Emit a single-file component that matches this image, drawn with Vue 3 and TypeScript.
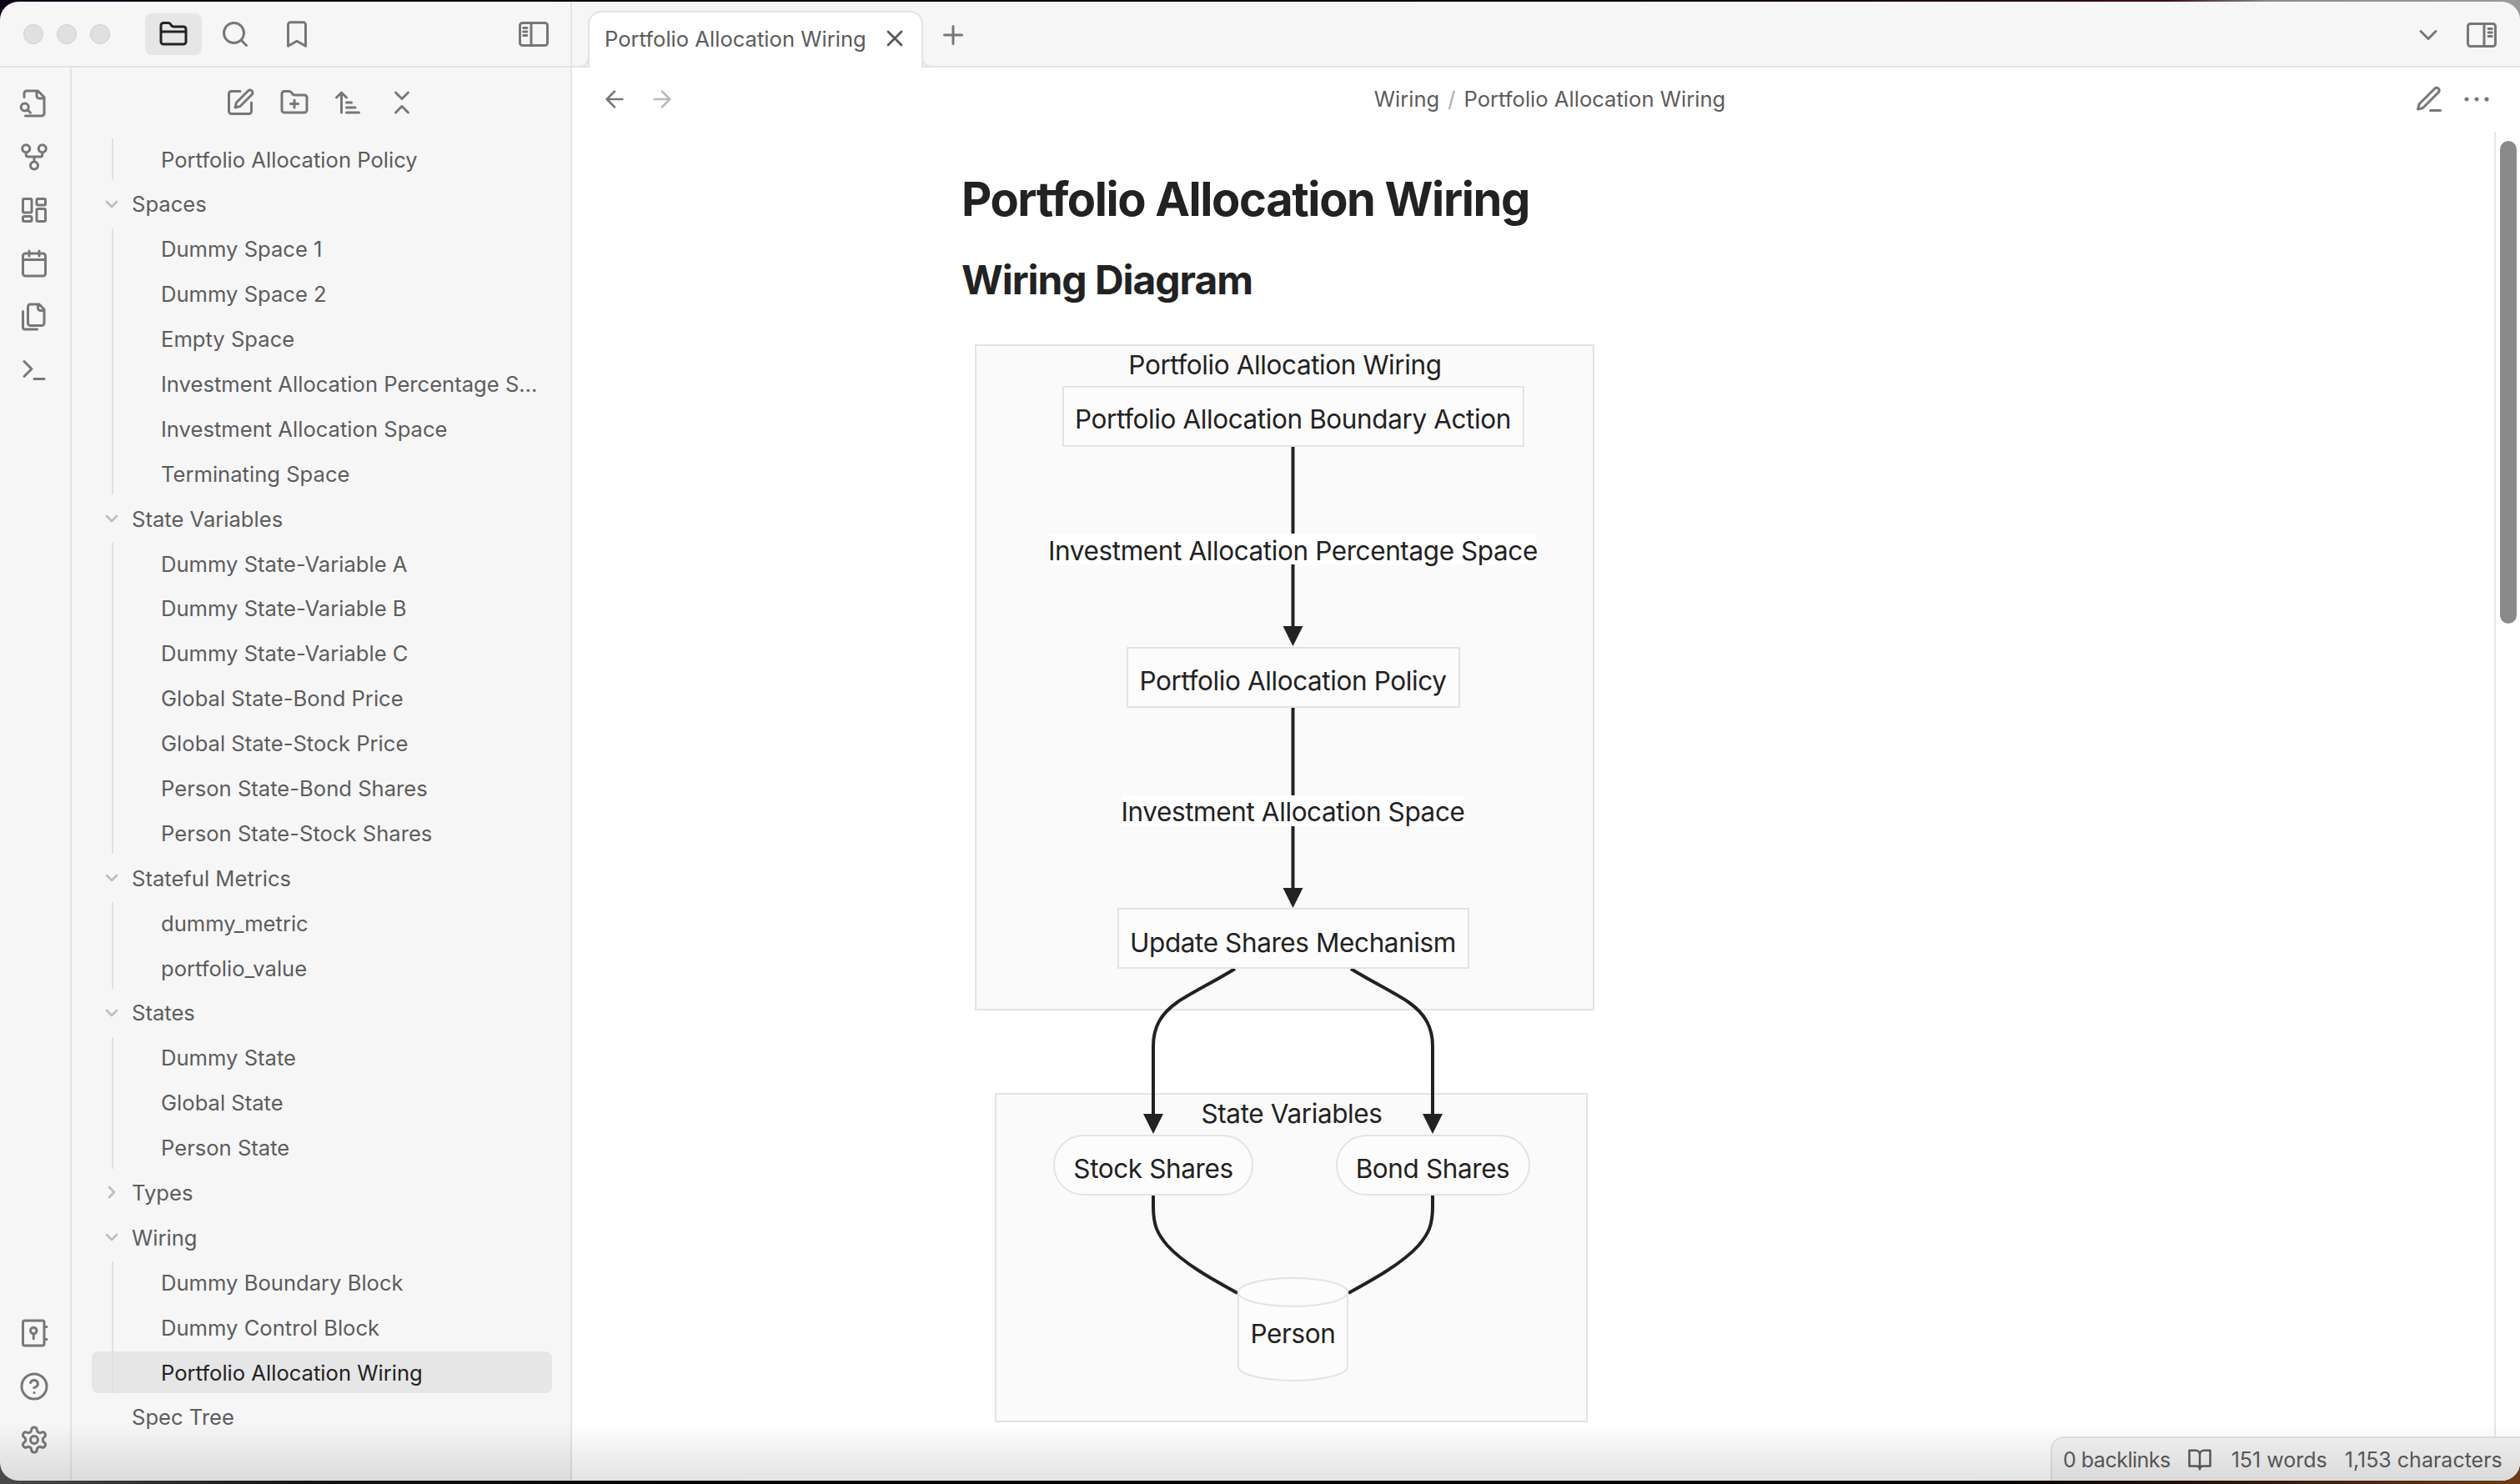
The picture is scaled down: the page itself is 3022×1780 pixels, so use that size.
<template>
  <div class="window">
    <!-- title bar -->
    <div class="titlebar">
      <div class="title-left">
        <div class="lights"><span></span><span></span><span></span></div>
        <div class="title-btn active"><svg class="icon" viewBox="0 0 24 24"><path :d="icons.folder" /></svg></div>
        <div class="title-btn"><svg class="icon" viewBox="0 0 24 24"><path :d="icons.search" /></svg></div>
        <div class="title-btn"><svg class="icon" viewBox="0 0 24 24"><path :d="icons.bookmark" /></svg></div>
        <svg class="icon toggle" viewBox="0 0 24 24"><path :d="icons.sidebarLeft" /></svg>
      </div>
      <div class="title-right">
        <div class="tab">
          <span>Portfolio Allocation Wiring</span>
          <svg class="icon close" viewBox="0 0 24 24"><path :d="icons.x" /></svg>
        </div>
        <svg class="icon plus" viewBox="0 0 24 24"><path :d="icons.plus" /></svg>
        <svg class="icon tab-list" viewBox="0 0 24 24"><path :d="icons.chevronDown" /></svg>
        <svg class="icon toggle-right" viewBox="0 0 24 24"><path :d="icons.sidebarRight" /></svg>
      </div>
    </div>

    <div class="body">
      <!-- ribbon -->
      <aside class="ribbon">
        <div class="ribbon-group">
          <svg v-for="name in ribbonTop" :key="name" class="icon" viewBox="0 0 24 24"><path :d="icons[name]" /></svg>
        </div>
        <div class="ribbon-group">
          <svg v-for="name in ribbonBottom" :key="name" class="icon" viewBox="0 0 24 24"><path :d="icons[name]" /></svg>
        </div>
      </aside>

      <!-- file explorer -->
      <aside class="sidebar">
        <div class="sidebar-tools">
          <svg v-for="name in sidebarTools" :key="name" class="icon" viewBox="0 0 24 24"><path :d="icons[name]" /></svg>
        </div>
        <div class="tree">
          <template v-for="(group, i) in tree" :key="i">
            <div v-if="group.name" class="row folder">
              <svg v-if="group.chevron" class="chevron" viewBox="0 0 24 24"><path :d="group.chevron === 'down' ? icons.chevronDown : icons.chevronRight" /></svg>
              <span>{{ group.name }}</span>
            </div>
            <div v-if="group.children" class="children">
              <div
                v-for="child in group.children"
                :key="child"
                class="row file"
                :class="{ selected: child === activeFile }"
              ><span>{{ child }}</span></div>
            </div>
          </template>
        </div>
      </aside>

      <!-- note -->
      <main class="main">
        <header class="view-header">
          <div class="nav">
            <svg class="icon" viewBox="0 0 24 24"><path :d="icons.arrowLeft" /></svg>
            <svg class="icon faint" viewBox="0 0 24 24"><path :d="icons.arrowRight" /></svg>
          </div>
          <div class="crumbs">Wiring<i>/</i>Portfolio Allocation Wiring</div>
          <div class="actions">
            <svg class="icon" viewBox="0 0 24 24"><path :d="icons.pencil" /></svg>
            <svg class="icon" viewBox="0 0 24 24"><path :d="icons.more" /></svg>
          </div>
        </header>
        <div class="view">
          <div class="content">
            <h1>Portfolio Allocation Wiring</h1>
            <h2>Wiring Diagram</h2>
            <svg class="diagram" width="760" height="1310" viewBox="1160 405 760 1310">
              <rect class="cluster" x="1170" y="414" width="741" height="797" />
              <rect class="cluster" x="1194" y="1312" width="709" height="393" />

              <path class="edge" d="M1550.5 535V752M1550.5 848V1067" />
              <path class="edge" d="M1481 1162C1455 1178 1430 1190 1412 1202C1392 1216 1383 1232 1383 1255V1338" />
              <path class="edge" d="M1620 1162C1646 1178 1671 1190 1689 1202C1709 1216 1718 1232 1718 1255V1338" />
              <path class="edge" d="M1383 1433V1447C1383 1470 1388 1480 1400 1494C1420 1516 1455 1535 1484 1551" />
              <path class="edge" d="M1718 1433V1447C1718 1470 1713 1480 1701 1494C1681 1516 1646 1535 1617 1551" />
              <polygon class="head" points="1538.5,751 1562.5,751 1550.5,775" />
              <polygon class="head" points="1538.5,1065 1562.5,1065 1550.5,1089" />
              <polygon class="head" points="1371,1336 1395,1336 1383,1360" />
              <polygon class="head" points="1706,1336 1730,1336 1718,1360" />

              <rect class="node" x="1275" y="464" width="552" height="71" />
              <rect class="node" x="1352" y="777" width="398" height="71" />
              <rect class="node" x="1341" y="1090" width="420" height="71" />
              <rect class="node" x="1264" y="1362" width="238" height="71" rx="35.5" />
              <rect class="node" x="1603" y="1362" width="231" height="71" rx="35.5" />
              <path class="node" d="M1485 1550a65.5 17 0 0 0 131 0a65.5 17 0 0 0 -131 0V1639a65.5 17 0 0 0 131 0V1550" />

              <rect class="label-bg" x="1259" y="640" width="583" height="37" />
              <rect class="label-bg" x="1345" y="954" width="411" height="37" />

              <text x="1541" y="449">Portfolio Allocation Wiring</text>
              <text x="1550.5" y="514">Portfolio Allocation Boundary Action</text>
              <text x="1550.5" y="672">Investment Allocation Percentage Space</text>
              <text x="1550.5" y="828">Portfolio Allocation Policy</text>
              <text x="1550.5" y="985">Investment Allocation Space</text>
              <text x="1550.5" y="1142">Update Shares Mechanism</text>
              <text x="1549" y="1347">State Variables</text>
              <text x="1383" y="1413">Stock Shares</text>
              <text x="1718" y="1413">Bond Shares</text>
              <text x="1550.5" y="1611">Person</text>
            </svg>
          </div>
          <div class="scrollbar"><div class="thumb"></div></div>
        </div>
      </main>
    </div>

    <div class="status">
      <span class="backlinks">0 backlinks</span>
      <svg class="icon book" viewBox="0 0 24 24"><path :d="icons.book" /></svg>
      <span class="words">151 words</span>
      <span>1,153 characters</span>
    </div>
    <div class="fade"></div>
  </div>
</template>

<script setup lang="ts">
interface Group {
  name?: string
  chevron?: 'down' | 'right'
  children?: string[]
}

const circle = (x: number, y: number, r: number) =>
  `M${x - r} ${y}a${r} ${r} 0 1 0 ${2 * r} 0a${r} ${r} 0 1 0 ${-2 * r} 0`
const box = (x: number, y: number, w: number, h: number, r: number) =>
  `M${x + r} ${y}h${w - 2 * r}a${r} ${r} 0 0 1 ${r} ${r}v${h - 2 * r}a${r} ${r} 0 0 1 ${-r} ${r}h${2 * r - w}a${r} ${r} 0 0 1 ${-r} ${-r}v${2 * r - h}a${r} ${r} 0 0 1 ${r} ${-r}z`

const folderShape =
  'M20 20a2 2 0 0 0 2-2V8a2 2 0 0 0-2-2h-7.9a2 2 0 0 1-1.69-.9L9.6 3.9A2 2 0 0 0 7.93 3H4a2 2 0 0 0-2 2v13a2 2 0 0 0 2 2Z'

const icons: Record<string, string> = {
  folder: folderShape + 'M2 10h20',
  search: circle(11, 11, 8) + 'M21 21l-4.3-4.3',
  bookmark: 'M19 21.5l-7-4-7 4V4.5a2 2 0 0 1 2-2h10a2 2 0 0 1 2 2v17z',
  sidebarLeft: box(1, 3, 22, 18, 2) + 'M10 3v18M3.8 7h2.8M3.8 10h2.8M3.8 13h2.8',
  sidebarRight: box(1, 3, 22, 18, 2) + 'M14 3v18M17.4 7h2.8M17.4 10h2.8M17.4 13h2.8',
  fileSearch: 'M14 2v4a2 2 0 0 0 2 2h4M4 7V4a2 2 0 0 1 2-2h9l5 5v13a2 2 0 0 1-2 2H5' + circle(4.5, 15, 3) + 'M9 19.5l-2.4-2.4',
  fork: circle(12, 19, 3) + circle(5.5, 5.5, 3) + circle(18.5, 5.5, 3) + 'M18.5 8.5v2c0 .9-.6 1.5-1.5 1.5H7c-.9 0-1.5-.6-1.5-1.5v-2M12 12v4',
  dashboard: box(3, 3, 7, 11, 1) + box(14, 3, 7, 5, 1) + box(14, 11, 7, 10, 1) + box(3, 17, 7, 4, 1),
  calendar: 'M8 2v4M16 2v4' + box(3, 4, 18, 18, 2) + 'M3 9h18',
  files: 'M20 7h-3a2 2 0 0 1-2-2V2M9 19a2 2 0 0 1-2-2V4a2 2 0 0 1 2-2h7l4 4v11a2 2 0 0 1-2 2ZM3 7.6v12.8A1.6 1.6 0 0 0 4.6 22h9.8',
  terminal: 'M4 17l6-6-6-6M12 19h8',
  vault: box(3, 2, 17, 20, 1.5) + circle(11.5, 10, 2.5) + 'M11.5 12.5v4M22 7h-2M22 17h-2',
  help: circle(12, 12, 10) + 'M9.09 9a3 3 0 0 1 5.83 1c0 2-3 3-3 3M12 17h.01',
  settings:
    'M12.22 2h-.44a2 2 0 0 0-2 2v.18a2 2 0 0 1-1 1.73l-.43.25a2 2 0 0 1-2 0l-.15-.08a2 2 0 0 0-2.73.73l-.22.38a2 2 0 0 0 .73 2.73l.15.1a2 2 0 0 1 1 1.72v.51a2 2 0 0 1-1 1.74l-.15.09a2 2 0 0 0-.73 2.73l.22.38a2 2 0 0 0 2.73.73l.15-.08a2 2 0 0 1 2 0l.43.25a2 2 0 0 1 1 1.73V20a2 2 0 0 0 2 2h.44a2 2 0 0 0 2-2v-.18a2 2 0 0 1 1-1.73l.43-.25a2 2 0 0 1 2 0l.15.08a2 2 0 0 0 2.73-.73l.22-.39a2 2 0 0 0-.73-2.73l-.15-.08a2 2 0 0 1-1-1.74v-.5a2 2 0 0 1 1-1.74l.15-.09a2 2 0 0 0 .73-2.73l-.22-.38a2 2 0 0 0-2.73-.73l-.15.08a2 2 0 0 1-2 0l-.43-.25a2 2 0 0 1-1-1.73V4a2 2 0 0 0-2-2z' +
    circle(12, 12, 3),
  edit: 'M12 3H5a2 2 0 0 0-2 2v14a2 2 0 0 0 2 2h14a2 2 0 0 0 2-2v-7M18.375 2.625a2.121 2.121 0 1 1 3 3L12 15l-4 1 1-4Z',
  folderPlus: folderShape + 'M12 10v6M9 13h6',
  sort: 'M3 8l4-4 4 4M7 4v16M11 12h4M11 16h7M11 20h10',
  collapse: 'M7 20l5-5 5 5M7 4l5 5 5-5',
  x: 'M18 6L6 18M6 6l12 12',
  plus: 'M5 12h14M12 5v14',
  chevronDown: 'M6 9l6 6 6-6',
  chevronRight: 'M9 18l6-6-6-6',
  arrowLeft: 'M12 19l-7-7 7-7M19 12H5',
  arrowRight: 'M5 12h14M12 5l7 7-7 7',
  pencil: 'M13 21h8M16.5 3.5a2.12 2.12 0 0 1 3 3L7 19l-4 1 1-4Z',
  more: circle(4, 12, 0.7) + circle(12, 12, 0.7) + circle(20, 12, 0.7),
  book: 'M2 3h6a4 4 0 0 1 4 4v14a3 3 0 0 0-3-3H2zM22 3h-6a4 4 0 0 0-4 4v14a3 3 0 0 1 3-3h7z',
}

const ribbonTop = ['fileSearch', 'fork', 'dashboard', 'calendar', 'files', 'terminal']
const ribbonBottom = ['vault', 'help', 'settings']
const sidebarTools = ['edit', 'folderPlus', 'sort', 'collapse']

const activeFile = 'Portfolio Allocation Wiring'

const tree: Group[] = [
  { children: ['Portfolio Allocation Policy'] },
  {
    name: 'Spaces',
    chevron: 'down',
    children: [
      'Dummy Space 1',
      'Dummy Space 2',
      'Empty Space',
      'Investment Allocation Percentage Space',
      'Investment Allocation Space',
      'Terminating Space',
    ],
  },
  {
    name: 'State Variables',
    chevron: 'down',
    children: [
      'Dummy State-Variable A',
      'Dummy State-Variable B',
      'Dummy State-Variable C',
      'Global State-Bond Price',
      'Global State-Stock Price',
      'Person State-Bond Shares',
      'Person State-Stock Shares',
    ],
  },
  { name: 'Stateful Metrics', chevron: 'down', children: ['dummy_metric', 'portfolio_value'] },
  { name: 'States', chevron: 'down', children: ['Dummy State', 'Global State', 'Person State'] },
  { name: 'Types', chevron: 'right' },
  {
    name: 'Wiring',
    chevron: 'down',
    children: ['Dummy Boundary Block', 'Dummy Control Block', 'Portfolio Allocation Wiring'],
  },
  { name: 'Spec Tree' },
]
</script>

<style>
html,
body {
  margin: 0;
  height: 1780px;
  overflow: hidden;
  background:
    linear-gradient(90deg, #0c0318 0%, #000 35%, #000 50%, #1a0612 75%, #3a0c14 86%, #8a8a8a 90%, #9a9a9a 100%) top / 100% 24px no-repeat,
    linear-gradient(90deg, #4a4a4a 0%, #161616 12%, #000 30%, #000 78%, #2a1408 88%, #6a3c1c 100%) bottom / 100% 30px no-repeat,
    #000;
}
</style>

<style scoped>
.window {
  position: relative;
  display: flex;
  flex-direction: column;
  width: 3022px;
  height: 1774px;
  margin-top: 2px;
  overflow: hidden;
  border-radius: 22px;
  background: #f6f6f6;
  color: #5c5c5c;
  font-family: Inter, "Noto Sans", sans-serif;
  font-size: 25.6px;
}

.icon {
  flex: none;
  width: 36px;
  height: 36px;
  fill: none;
  stroke: #777;
  stroke-width: 2;
  stroke-linecap: round;
  stroke-linejoin: round;
}

/* title bar */
.titlebar {
  flex: none;
  display: flex;
  height: 79px;
}

.title-left {
  flex: none;
  display: flex;
  align-items: center;
  box-sizing: border-box;
  width: 686px;
  padding: 0 26px 0 28px;
  border-right: 2px solid #e3e3e3;
  border-bottom: 2px solid #e3e3e3;
}

.lights {
  display: flex;
  gap: 16px;
  margin-right: 42px;
}

.lights span {
  box-sizing: border-box;
  width: 24px;
  height: 24px;
  border: 1px solid #cfcfcf;
  border-radius: 50%;
  background: #e0e0e0;
}

.title-btn {
  display: flex;
  align-items: center;
  justify-content: center;
  width: 68px;
  height: 50px;
  margin-right: 6px;
  border-radius: 8px;
}

.title-btn.active {
  background: #e6e6e6;
}

.title-btn.active .icon {
  stroke: #222;
}

.toggle {
  margin-left: auto;
}

.title-right {
  flex: 1;
  display: flex;
  align-items: flex-end;
  box-sizing: border-box;
  padding: 0 28px 2px 19px;
  border-bottom: 2px solid #e3e3e3;
}

.title-right > .icon {
  align-self: center;
  margin-top: 5px;
}

.tab {
  position: relative;
  display: flex;
  align-items: center;
  box-sizing: border-box;
  width: 402px;
  height: 68px;
  margin-bottom: -4px;
  padding: 0 16px 4px 18px;
  border: 2px solid #e3e3e3;
  border-bottom: none;
  border-radius: 16px 16px 0 0;
  background: #fff;
  white-space: nowrap;
}

.tab::before,
.tab::after {
  content: "";
  position: absolute;
  bottom: 0;
  width: 12px;
  height: 12px;
  border-bottom: 2px solid #e3e3e3;
  background: #f6f6f6;
}

.tab::before {
  right: 100%;
  border-right: 2px solid #e3e3e3;
  border-radius: 0 0 12px 0;
}

.tab::after {
  left: 100%;
  border-left: 2px solid #e3e3e3;
  border-radius: 0 0 0 12px;
}

.close {
  width: 32px;
  height: 32px;
  margin-left: auto;
  stroke: #555;
}

.plus {
  margin-left: 18px;
}

.tab-list {
  margin-left: auto;
}

.toggle-right {
  margin-left: 28px;
}

/* body columns */
.body {
  flex: 1;
  display: flex;
  min-height: 0;
}

.ribbon {
  flex: none;
  display: flex;
  flex-direction: column;
  justify-content: space-between;
  align-items: center;
  box-sizing: border-box;
  width: 86px;
  padding: 25px 0 31px;
  border-right: 2px solid #e3e3e3;
}

.ribbon-group {
  display: flex;
  flex-direction: column;
  gap: 28px;
  margin-left: -2px;
}

.sidebar {
  flex: none;
  box-sizing: border-box;
  width: 600px;
  border-right: 2px solid #e3e3e3;
}

.sidebar-tools {
  display: flex;
  justify-content: center;
  gap: 28.4px;
  height: 85px;
  padding-top: 24px;
  box-sizing: border-box;
}

.tree {
  display: flex;
  flex-direction: column;
  gap: 3.9px;
}

.children {
  position: relative;
  display: flex;
  flex-direction: column;
  gap: 3.9px;
}

.children::before {
  content: "";
  position: absolute;
  top: 0;
  bottom: 0;
  left: 48px;
  width: 2px;
  background: #e0e0e0;
}

.row {
  display: flex;
  align-items: center;
  box-sizing: border-box;
  width: 552px;
  height: 50px;
  margin-left: 24px;
  border-radius: 8px;
  white-space: nowrap;
}

.row span {
  overflow: hidden;
  text-overflow: ellipsis;
}

.folder {
  padding-left: 48px;
}

.chevron {
  flex: none;
  width: 24px;
  height: 24px;
  margin: 0 12px 0 -36px;
  fill: none;
  stroke: #bdbdbd;
  stroke-width: 2.6;
  stroke-linecap: round;
  stroke-linejoin: round;
}

.file {
  padding: 0 14px 0 83px;
}

.file.selected {
  background: #e6e6e6;
  color: #222;
}

/* note */
.main {
  flex: 1;
  display: flex;
  flex-direction: column;
  min-width: 0;
  background: #fff;
}

.view-header {
  flex: none;
  display: grid;
  grid-template-columns: 1fr auto 1fr;
  align-items: center;
  box-sizing: border-box;
  height: 77px;
  padding: 0 34px 2px 35px;
}

.nav {
  display: flex;
  gap: 25px;
}

.nav .icon {
  width: 32px;
  height: 32px;
}

.faint {
  opacity: 0.5;
}

.crumbs {
  padding-left: 8px;
  white-space: nowrap;
}

.crumbs i {
  margin: 0 10px;
  font-style: normal;
  color: #ababab;
}

.actions {
  display: flex;
  justify-content: flex-end;
  gap: 21px;
}

.view {
  flex: 1;
  display: flex;
  min-height: 0;
}

.content {
  flex: 1;
  min-width: 0;
  padding: 47px 0 0 467px;
}

h1 {
  margin: 0;
  color: #222;
  font-size: 56px;
  font-weight: 700;
  line-height: 68px;
  letter-spacing: -0.025em;
  white-space: nowrap;
}

h2 {
  margin: 35px 0 41px;
  color: #222;
  font-size: 48px;
  font-weight: 700;
  line-height: 56px;
  letter-spacing: -0.022em;
}

.diagram {
  display: block;
  margin-left: 7px;
}

.diagram text {
  fill: #222;
  font-family: Inter, "Noto Sans", sans-serif;
  font-size: 31.5px;
  letter-spacing: -0.4px;
  text-anchor: middle;
}

.cluster {
  fill: #fafafa;
  stroke: #e3e3e3;
  stroke-width: 2;
}

.node {
  fill: #fcfcfc;
  stroke: #e3e3e3;
  stroke-width: 2;
}

.edge {
  fill: none;
  stroke: #222;
  stroke-width: 4;
}

.head {
  fill: #222;
}

.label-bg {
  fill: #fff;
}

.scrollbar {
  flex: none;
  box-sizing: border-box;
  width: 31px;
  padding: 11px 4px 0 5px;
  border-left: 2px solid #e6e6e6;
}

.thumb {
  height: 579px;
  border-radius: 11px;
  background: #8a8a8a;
}

.status {
  position: absolute;
  right: 0;
  bottom: 0;
  display: flex;
  align-items: center;
  box-sizing: border-box;
  width: 563px;
  height: 53px;
  padding: 0 13px;
  border: 2px solid #e3e3e3;
  border-width: 2px 0 0 2px;
  border-top-left-radius: 16px;
  background: #f4f4f4;
  font-size: 25px;
  white-space: nowrap;
}

.backlinks {
  letter-spacing: -0.5px;
}

.book {
  width: 30px;
  height: 30px;
  margin: 0 23px 0 20px;
  stroke: #5c5c5c;
}

.words {
  margin-right: 21px;
}

.fade {
  position: absolute;
  left: 0;
  right: 0;
  bottom: 0;
  height: 70px;
  background: linear-gradient(rgba(0, 0, 0, 0), rgba(0, 0, 0, 0.11));
  pointer-events: none;
}
</style>
